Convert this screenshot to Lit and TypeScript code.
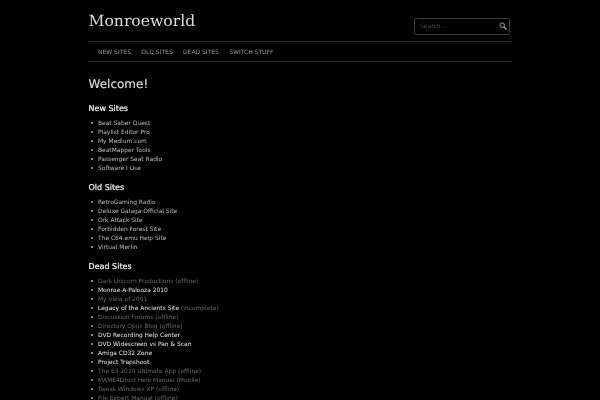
import { LitElement, html, css } from "lit";
import { customElement } from "lit/decorators.js";

type Item = { t: string; dim?: boolean; note?: string };

const sections: { title: string; items: Item[] }[] = [
  { title: "New Sites", items: ["Beat Saber Quest", "Playlist Editor Pro", "My Medium.com", "BeatMapper Tools", "Passenger Seat Radio", "Software I Use"].map((t) => ({ t })) },
  { title: "Old Sites", items: ["RetroGaming Radio", "Deluxe Galaga Official Site", "Ork Attack Site", "Forbidden Forest Site", "The C64.emu Help Site", "Virtual Merlin"].map((t) => ({ t })) },
  {
    title: "Dead Sites",
    items: [
      { t: "Dark Unicorn Productions (offline)", dim: true },
      { t: "Monroe-A-Palooza 2010" },
      { t: "My View of 2001", dim: true },
      { t: "Legacy of the Ancients Site", note: " (incomplete)" },
      { t: "Discussion Forums (offline)", dim: true },
      { t: "Directory Opus Blog (offline)", dim: true },
      { t: "DVD Recording Help Center" },
      { t: "DVD Widescreen vs Pan & Scan" },
      { t: "Amiga CD32 Zone" },
      { t: "Project Trapshoot" },
      { t: "The E3 2010 Ultimate App (offline)", dim: true },
      { t: "MAME4Droid Help Manual (Mobile)", dim: true },
      { t: "Tweak Windows XP (offline)", dim: true },
      { t: "File Expert Manual (offline)", dim: true },
    ],
  },
];

@customElement("app-root")
export class AppRoot extends LitElement {
  static styles = css`
    :host {
      display: block;
      height: 400px;
      overflow: hidden;
      background: #000;
      color: #ccc;
      font-family: "DejaVu Sans", sans-serif;
      font-size: 5.95px;
      text-rendering: geometricPrecision;
    }
    .wrap { width: 424px; margin-left: 88px; filter: blur(0.25px); }
    .head { display: flex; justify-content: space-between; align-items: flex-start; height: 41px; }
    .logo { font-family: "DejaVu Serif", serif; font-size: 15.6px; line-height: 20px; color: #ddd; margin: 10.5px 0 0 0.5px; font-weight: 400; }
    .search {
      box-sizing: border-box; width: 96px; height: 17px; margin: 17.5px 2px 0 0;
      border: 1px solid #3a3a3a; border-radius: 2px; display: flex; align-items: center; justify-content: space-between;
      padding: 0 2.5px 0 5px; color: #444; font-size: 6px;
    }
    .search svg { display: block; }
    nav { display: flex; gap: 10.3px; align-items: center; padding: 1px 0 0 10px; border-top: 1px solid #2c2c2c; border-bottom: 1px solid #2c2c2c; color: #999; font-size: 6px; height: 18px; }
    h1 { font-size: 12px; font-weight: 400; line-height: 18px; color: #ddd; margin: 13px 0 0 0.5px; -webkit-text-stroke: 0.15px #ddd; }
    h2 { font-size: 8px; font-weight: 400; line-height: 12px; color: #fff; margin: 0 0 0 0.5px; -webkit-text-stroke: 0.15px #fff; }
    h1 + h2 { margin-top: 9.5px; }
    ul { margin: 4px 0 9px; padding: 0 0 0 10px; list-style: none; }
    li { line-height: 9px; color: #bbb; }
    li::before { content: ""; display: inline-block; width: 2px; height: 2px; border-radius: 50%; background: #aaa; margin: 0 5.5px 0.5px -7.5px; vertical-align: middle; }
    .dim { color: #666; }
    .bright { color: #e4e4e4; }
  `;

  render() {
    return html`
      <div class="wrap">
        <div class="head">
          <p class="logo">Monroeworld</p>
          <div class="search">
            <span>Search...</span>
            <svg width="8" height="8" viewBox="0 0 9 9" fill="none" stroke="#aaa"><circle cx="3.6" cy="3.6" r="2.6"/><path d="M5.6 5.6 8.4 8.4" stroke-width="1.4"/></svg>
          </div>
        </div>
        <nav><span>NEW SITES</span><span>OLD SITES</span><span>DEAD SITES</span><span>SWITCH STUFF</span></nav>
        <h1>Welcome!</h1>
        ${sections.map(
          (s) => html`
            <h2>${s.title}</h2>
            <ul>
              ${s.items.map(
                (i) => html`<li class=${i.dim ? "dim" : s.title === "Dead Sites" ? "bright" : ""}>${i.t}${i.note ? html`<span class="dim">${i.note}</span>` : ""}</li>`
              )}
            </ul>
          `
        )}
      </div>
    `;
  }
}
